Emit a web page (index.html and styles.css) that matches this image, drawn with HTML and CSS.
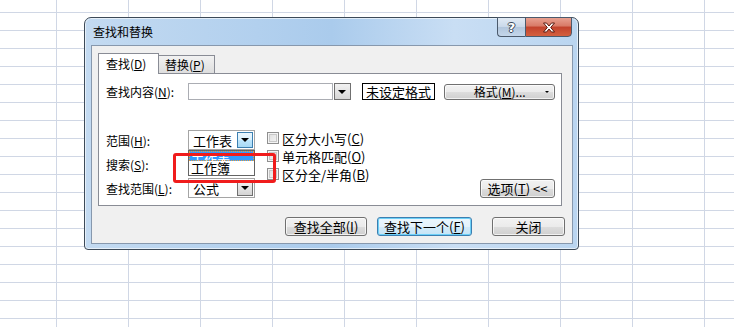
FILE: index.html
```html
<!DOCTYPE html>
<html lang="zh-CN">

<head>
    <meta charset="UTF-8">
    <title>查找和替换</title>
    <link rel="stylesheet" href="styles.css">
</head>

<body>
    <div class="dialog">
        <div class="titlebar">
            <span class="title">查找和替换</span>
            <div class="caption">
                <div class="cap help">?</div>
                <div class="cap close">
                    <svg width="14" height="11" viewBox="0 0 14 11">
                        <path d="M1.5 1 L4.5 1 L7 4 L9.5 1 L12.5 1 L8.7 5.5 L12.5 10 L9.5 10 L7 7 L4.5 10 L1.5 10 L5.3 5.5 Z" fill="#fff" stroke="#5a1a10" stroke-width="1"/>
                    </svg>
                </div>
            </div>
        </div>
        <div class="client">
            <div class="tabs">
                <div class="tab active">查找(<u>D</u>)</div>
                <div class="tab">替换(<u>P</u>)</div>
            </div>
            <div class="pane">
                <div class="find-row">
                    <span class="lbl">查找内容(<u>N</u>):</span>
                    <div class="combo wide">
                        <div class="field"></div>
                        <div class="arrow"></div>
                    </div>
                    <div class="preview">未设定格式</div>
                    <div class="btn fmt-btn">格式(<u>M</u>)... <span class="caret"></span></div>
                </div>
                <div class="options">
                    <div class="opt-col">
                        <div class="opt-row">
                            <span class="lbl">范围(<u>H</u>):</span>
                            <div class="combo small">
                                <div class="field">工作表</div>
                                <div class="arrow hot"></div>
                                <div class="droplist">
                                    <div class="item sel"><span>工作表</span></div>
                                    <div class="item">工作簿</div>
                                </div>
                            </div>
                        </div>
                        <div class="opt-row">
                            <span class="lbl">搜索(<u>S</u>):</span>
                            <div class="combo small">
                                <div class="field"></div>
                                <div class="arrow"></div>
                            </div>
                        </div>
                        <div class="opt-row">
                            <span class="lbl">查找范围(<u>L</u>):</span>
                            <div class="combo small">
                                <div class="field">公式</div>
                                <div class="arrow"></div>
                            </div>
                        </div>
                    </div>
                    <div class="checks">
                        <div class="check"><i></i>区分大小写(<u>C</u>)</div>
                        <div class="check"><i></i>单元格匹配(<u>O</u>)</div>
                        <div class="check"><i></i>区分全/半角(<u>B</u>)</div>
                    </div>
                    <div class="btn opt-btn">选项(<u>T</u>) &lt;&lt;</div>
                </div>
            </div>
            <div class="actions">
                <div class="btn find-all">查找全部(<u>I</u>)</div>
                <div class="btn find-next">查找下一个(<u>F</u>)</div>
                <div class="btn close-btn">关闭</div>
            </div>
        </div>
    </div>
    <div class="callout"></div>
</body>

</html>
```

FILE: styles.css
```css
body {
    width: 734px;
    height: 327px;
    margin: 0;
    overflow: hidden;
    position: relative;
    font-family: "Noto Sans CJK SC", "DejaVu Sans", sans-serif;
    font-size: 12px;
    color: #000;
    background-color: #fff;
    background-image:
        linear-gradient(to right, #d0d7e5 1px, transparent 1px),
        linear-gradient(to bottom, #d0d7e5 1px, transparent 1px);
    background-size: 72px 100%, 100% 18px;
    background-position: 56px 0, 0 12px;
}

u {
    text-decoration: underline;
}

/* window frame */
.dialog {
    box-sizing: border-box;
    width: 495px;
    height: 233px;
    margin: 17px 0 0 84px;
    border: 1px solid #3d4a58;
    border-radius: 7px 7px 4px 4px;
    background: linear-gradient(to right, #c3daf1 0%, #b2d0ee 35%, #aacbec 50%, #c9def4 75%, #bad5f0 100%);
    box-shadow: inset 0 0 0 1px rgba(255, 255, 255, 0.6);
    display: flex;
    flex-direction: column;
}

.titlebar {
    height: 27px;
    display: flex;
    justify-content: space-between;
    align-items: flex-start;
}

.title {
    align-self: center;
    padding-left: 8px;
    font-size: 12px;
}

.caption {
    display: flex;
    margin-right: 6px;
    margin-top: -1px;
}

.cap {
    box-sizing: border-box;
    height: 20px;
    border: 1px solid #4b5a6c;
    display: flex;
    align-items: center;
    justify-content: center;
}

.help {
    width: 28px;
    border-radius: 0 0 0 4px;
    border-right: none;
    background: linear-gradient(#e1eaf4 0%, #c9d8e9 50%, #b2c6dc 51%, #c4d6ea 100%);
    color: #fff;
    font-family: "DejaVu Sans", sans-serif;
    font-weight: bold;
    font-size: 13px;
    text-shadow: 1px 0 0 #3a4656, -1px 0 0 #3a4656, 0 1px 0 #3a4656, 0 -1px 0 #3a4656;
}

.close {
    width: 47px;
    border-radius: 0 0 4px 0;
    background: linear-gradient(#e8a090 0%, #d87a66 45%, #c2422c 50%, #d4603f 100%);
}

.client {
    flex: 1;
    margin: 0 5px 5px 6px;
    border: 1px solid #8798ad;
    background: #f0f0f0;
    padding: 7px 7px 0 6px;
}

/* tabs */
.tabs {
    display: flex;
    align-items: flex-end;
    height: 20px;
}

.tab {
    box-sizing: border-box;
    height: 18px;
    padding: 0 6px;
    border: 1px solid #898c95;
    border-bottom: none;
    background: linear-gradient(#f2f2f2, #dedede);
    line-height: 17px;
    width: 56px;
}

.tab.active {
    height: 21px;
    width: 61px;
    background: #fff;
    position: relative;
    top: 1px;
    padding-left: 7px;
    line-height: 19px;
    z-index: 1;
}

.tab + .tab {
    border-left: none;
}

.pane {
    box-sizing: border-box;
    width: 464px;
    height: 133px;
    border: 1px solid #898c95;
    background: #fff;
    padding: 9px 6px 0 7px;
}

.find-row {
    display: flex;
    align-items: center;
    height: 17px;
}

.lbl {
    width: 82px;
    flex-shrink: 0;
}

.combo {
    box-sizing: border-box;
    display: flex;
    position: relative;
    background: #fff;
}

.combo.wide {
    width: 163px;
    height: 17px;
}

.combo.wide .field {
    flex: 1;
    border: 1px solid #abadb3;
}

.combo.wide .arrow {
    width: 17px;
    box-sizing: border-box;
    border: 1px solid #707070;
    margin-left: 1px;
    background: linear-gradient(#f2f2f2, #d6d6d6);
}

.combo.small {
    width: 67px;
    height: 20px;
    border: 1px solid #a5a5a5;
    padding: 1px;
}

.combo.small .field {
    flex: 1;
    padding-left: 3px;
    line-height: 17px;
    font-size: 13px;
}

.combo.small .arrow {
    box-sizing: border-box;
    width: 16px;
    border: 1px solid #707070;
    background: linear-gradient(#f3f3f3, #d4d4d4);
}

.arrow {
    display: flex;
    align-items: center;
    justify-content: center;
}

.arrow::after {
    content: "";
    border-left: 4px solid transparent;
    border-right: 4px solid transparent;
    border-top: 4px solid #000;
}

.combo.small .arrow.hot {
    border-color: #3c7fb1;
    background: linear-gradient(#eaf6fd 0%, #d9f0fc 50%, #bee6fd 51%, #a7d9f5 100%);
}

.droplist {
    position: absolute;
    top: 19px;
    left: -1px;
    width: 67px;
    height: 26px;
    box-sizing: border-box;
    border: 1px solid #646464;
    background: #fff;
    z-index: 2;
    font-size: 13px;
}

.item {
    height: 14px;
    line-height: 14px;
    padding-left: 2px;
}

.item.sel {
    height: 10px;
    overflow: hidden;
    background: #3399ff;
    color: #fff;
    outline: 1px dotted #e8a040;
    outline-offset: -1px;
}

.item.sel span {
    display: block;
    line-height: 17px;
}

.preview {
    box-sizing: border-box;
    width: 74px;
    height: 17px;
    margin-left: 11px;
    border: 1px solid #000;
    text-align: center;
    line-height: 15px;
    font-size: 13px;
}

.btn {
    box-sizing: border-box;
    border: 1px solid #707070;
    border-radius: 3px;
    background: linear-gradient(#f2f2f2 0%, #ebebeb 50%, #dddddd 51%, #cfcfcf 100%);
    box-shadow: inset 0 0 0 1px rgba(255, 255, 255, 0.7);
    display: flex;
    align-items: center;
    justify-content: center;
}

.fmt-btn {
    width: 111px;
    height: 16px;
    margin-left: 9px;
    position: relative;
}

.caret {
    position: absolute;
    right: 5px;
    top: 6px;
    border-left: 2px solid transparent;
    border-right: 2px solid transparent;
    border-top: 2px solid #000;
}

/* options block */
.options {
    display: flex;
    margin-top: 30px;
}

.opt-col {
    display: flex;
    flex-direction: column;
    gap: 4px;
}

.opt-row {
    display: flex;
    align-items: center;
    height: 20px;
}

.checks {
    display: flex;
    flex-direction: column;
    margin-left: 12px;
    margin-top: -1px;
}

.check {
    height: 18px;
    display: flex;
    align-items: center;
    font-size: 13px;
}

.check i {
    box-sizing: border-box;
    width: 12px;
    height: 12px;
    margin-right: 3px;
    border: 1px solid #8f8f8f;
    background: linear-gradient(135deg, #dcdcdc, #f6f6f6);
    box-shadow: inset 0 0 0 1px #f4f4f4, inset 0 0 0 2px #c8c8c8;
}

.opt-btn {
    width: 75px;
    height: 19px;
    margin-left: auto;
    align-self: flex-end;
    font-size: 13px;
}

/* bottom buttons */
.actions {
    display: flex;
    justify-content: flex-end;
    margin-top: 11px;
    font-size: 13px;
}

.actions .btn {
    height: 19px;
}

.find-all {
    width: 82px;
}

.find-next {
    width: 95px;
    margin-left: 10px;
    border-color: #3c7fb1;
    box-shadow: inset 0 0 0 1px #6dd0f7;
    background: linear-gradient(#eaf6fd 0%, #e4f2fb 50%, #d3ebf9 51%, #c6e4f6 100%);
}

.close-btn {
    width: 73px;
    margin-left: 20px;
}

/* annotation */
.callout {
    position: absolute;
    left: 173px;
    top: 153px;
    width: 103px;
    height: 30px;
    box-sizing: border-box;
    border: 3px solid #f01c1c;
    border-radius: 3px;
    z-index: 3;
}
```
